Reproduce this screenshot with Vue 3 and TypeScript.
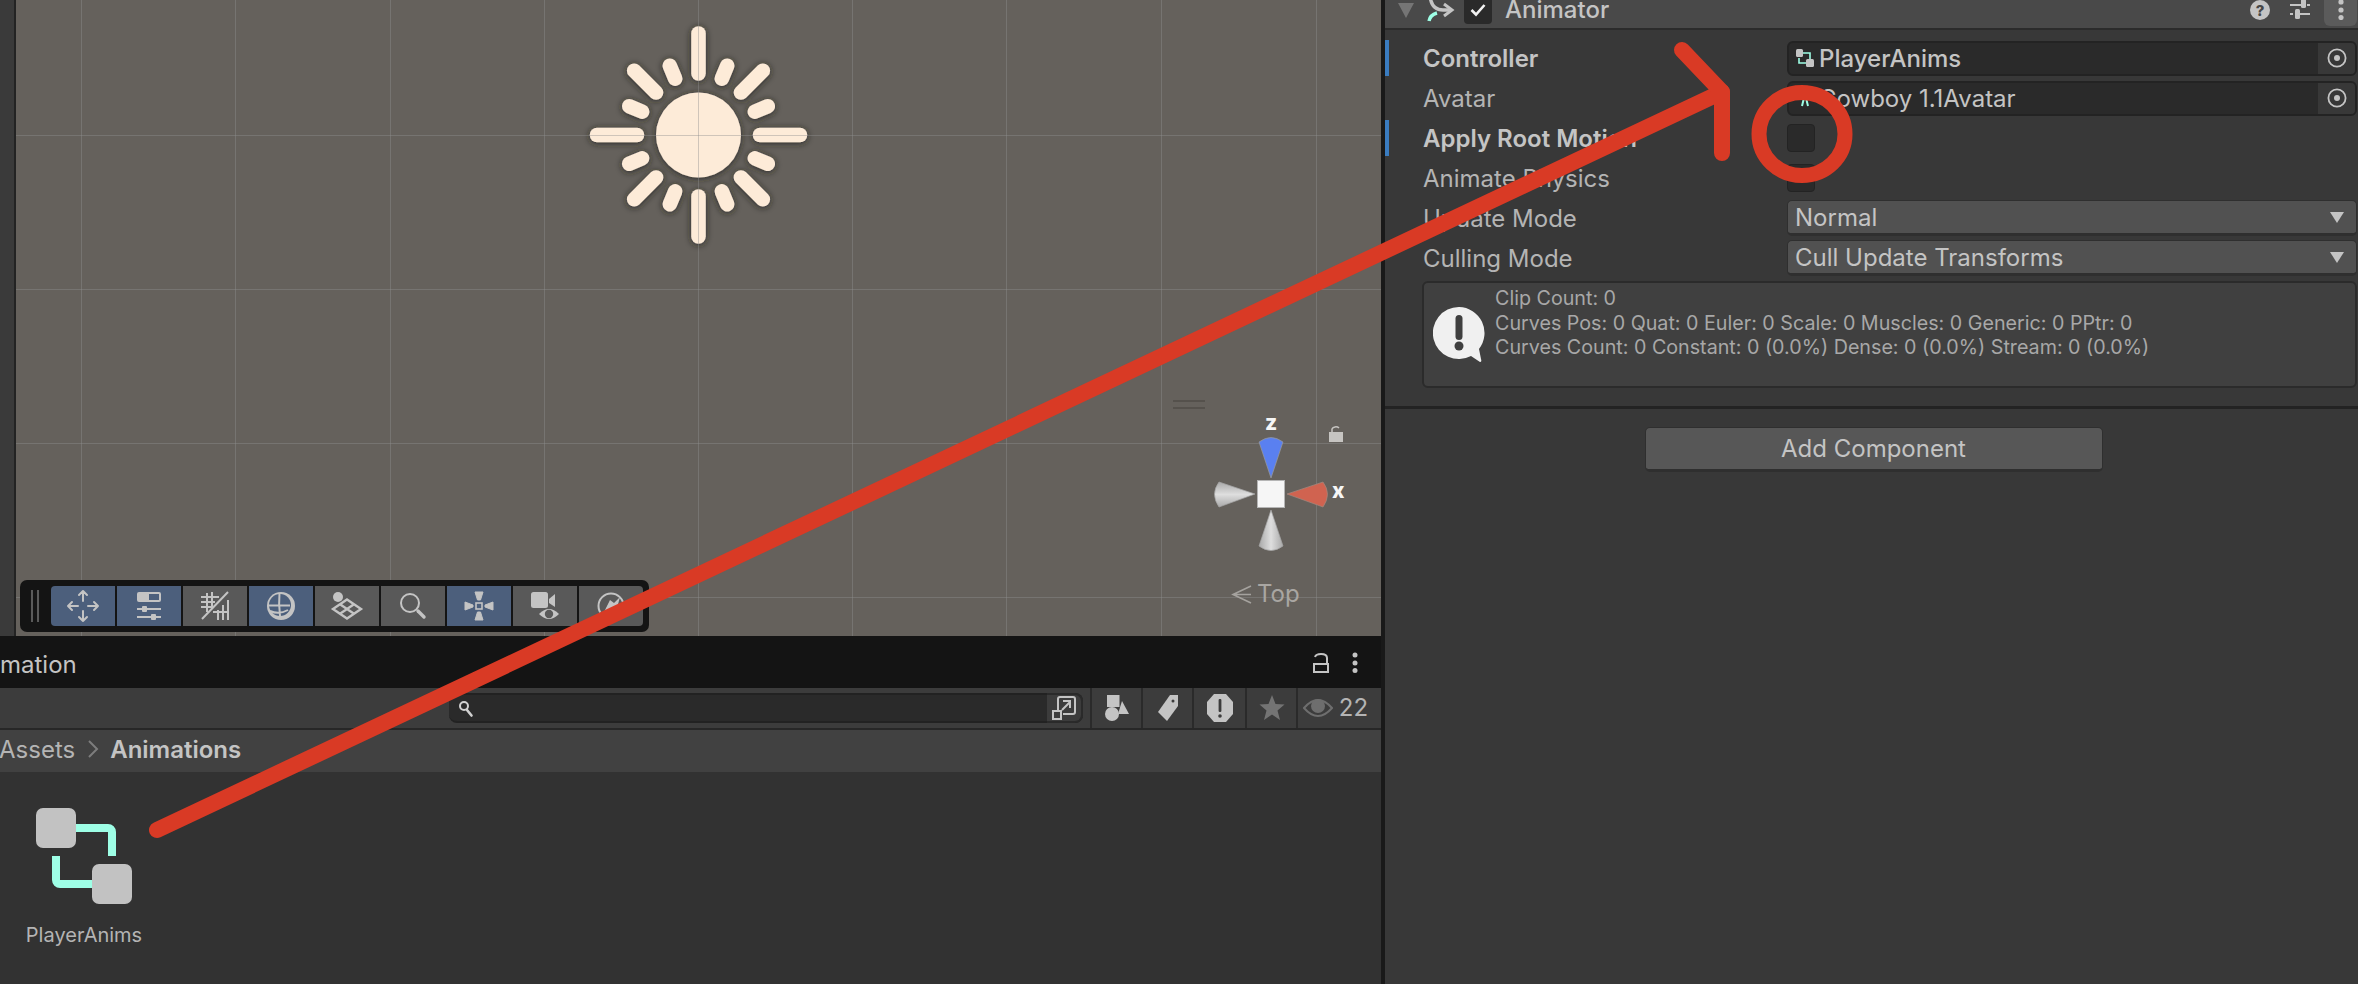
<script setup lang="ts">
const vLines: number[] = [81.5, 235.5, 390.5, 544.5, 698.5, 852.5, 1006.5, 1161.5, 1316.5]
const hLines: number[] = [135.5, 289.5, 443.5, 597.5]

interface Ray { a: number; r1: number; r2: number; w: number }
const rays: Ray[] = []
for (let i = 0; i < 16; i++) {
  const a = i * 22.5
  if (i % 4 === 0) rays.push({ a, r1: 61.5, r2: 101.5, w: 14.5 })
  else if (i % 2 === 0) rays.push({ a, r1: 60, r2: 91, w: 14.5 })
  else rays.push({ a, r1: 61, r2: 75, w: 14.5 })
}

interface Row {
  label: string
  kind: 'object' | 'check' | 'select'
  value?: string
  bold?: boolean
  marked?: boolean
}
const rows: Row[] = [
  { label: 'Controller', kind: 'object', value: 'PlayerAnims', bold: true, marked: true },
  { label: 'Avatar', kind: 'object', value: 'Cowboy 1.1Avatar' },
  { label: 'Apply Root Motion', kind: 'check', bold: true, marked: true },
  { label: 'Animate Physics', kind: 'check' },
  { label: 'Update Mode', kind: 'select', value: 'Normal' },
  { label: 'Culling Mode', kind: 'select', value: 'Cull Update Transforms' },
]
</script>

<template>
  <div class="app">
    <div class="left">
      <section class="scene">
        <svg class="canvas" width="1365" height="636" viewBox="16 0 1365 636">
          <defs>
            <filter id="sunshadow" x="-20%" y="-20%" width="140%" height="140%">
              <feDropShadow dx="0" dy="1" stdDeviation="3.500" flood-color="#1e1a16" flood-opacity="0.85" />
            </filter>
            <linearGradient id="coneV" x1="0" y1="0" x2="1" y2="0">
              <stop offset="0" stop-color="#a9a9a9" />
              <stop offset="0.5" stop-color="#dedede" />
              <stop offset="1" stop-color="#a9a9a9" />
            </linearGradient>
            <linearGradient id="coneH" x1="0" y1="0" x2="0" y2="1">
              <stop offset="0" stop-color="#a9a9a9" />
              <stop offset="0.5" stop-color="#dedede" />
              <stop offset="1" stop-color="#a9a9a9" />
            </linearGradient>
          </defs>
          <g filter="url(#sunshadow)" fill="#fdebd8">
            <circle cx="698.5" cy="135" r="42.5" />
            <g stroke="#fdebd8" stroke-linecap="round">
              <line
                v-for="(r, i) in rays"
                :key="i"
                x1="698.5"
                :y1="135 - r.r1"
                x2="698.5"
                :y2="135 - r.r2"
                :stroke-width="r.w"
                :transform="`rotate(${r.a} 698.5 135)`"
              />
            </g>
          </g>
          <g stroke="#8f8f8f" stroke-opacity="0.42" stroke-width="1">
            <line v-for="x in vLines" :key="x" :x1="x" y1="0" :x2="x" y2="636" />
            <line v-for="y in hLines" :key="y" x1="16" :y1="y" x2="1381" :y2="y" />
          </g>
          <!-- view gizmo -->
          <g>
            <rect x="1173" y="400" width="32" height="2" fill="#55514c" />
            <rect x="1173" y="407" width="32" height="2" fill="#55514c" />
            <path d="M1271 478 L1259 442 Q1271 433 1283 442 Z" fill="#5a80f0" stroke="#9a9a9a" stroke-width="0.7" />
            <path d="M1287 494 L1323 482 Q1332 494 1323 507 Z" fill="#d06350" stroke="#a08a80" stroke-width="0.7" />
            <path d="M1255 494 L1219 482 Q1210 494 1219 507 Z" fill="url(#coneH)" stroke="#a5a5a5" stroke-width="0.7" />
            <path d="M1271 510 L1259 546 Q1271 555 1283 546 Z" fill="url(#coneV)" stroke="#a5a5a5" stroke-width="0.7" />
            <rect x="1257.5" y="480.5" width="27" height="27" fill="#f6f6f6" stroke="#b5b5b5" />
            <rect x="1329" y="432" width="14" height="10" fill="#c6c4c1" />
            <path d="M1332 432 v-3 a4 3 0 0 1 7 -1" fill="none" stroke="#c6c4c1" stroke-width="1.5" />
            <path d="M1251 586 L1233 594.500 L1251 603 M1233 594.500 H1251" fill="none" stroke="#a5a29e" stroke-width="1.6" />
          </g>
        </svg>
        <span class="gizmo-letter letter-z">z</span>
        <span class="gizmo-letter letter-x">x</span>
        <span class="top-label">Top</span>

        <div class="overlay">
          <div class="grip"><i></i><i></i></div>
          <button class="tool on">
            <svg width="64" height="40" viewBox="0 0 64 40" fill="none" stroke="#c4c4c4" stroke-width="2" stroke-linecap="round" stroke-linejoin="round">
              <path d="M32 5 V15 M32 25 V35 M17 20 H27 M37 20 H47 M28 9 L32 5 L36 9 M28 31 L32 35 L36 31 M21 16 L17 20 L21 24 M43 16 L47 20 L43 24" />
            </svg>
          </button>
          <button class="tool on">
            <svg width="64" height="40" viewBox="0 0 64 40" fill="#c4c4c4">
              <rect x="20" y="6" width="24" height="10" rx="2" />
              <rect x="32" y="8" width="10" height="6" fill="#4c5f7c" />
              <rect x="20" y="22" width="24" height="2" />
              <rect x="25" y="20" width="5" height="6" rx="1" />
              <rect x="20" y="30" width="24" height="2" />
              <rect x="34" y="28" width="5" height="6" rx="1" />
            </svg>
          </button>
          <button class="tool">
            <svg width="64" height="40" viewBox="0 0 64 40" fill="none" stroke="#c4c4c4" stroke-width="2">
              <path d="M19 33 L45 6" />
              <path d="M24 7 V26 M29 6 V22 M18 11 H36 M18 16 H32 M18 21 H28 M35 24 V34 M40 19 V34 M45 14 V34 M30 26 H46" />
            </svg>
          </button>
          <button class="tool on">
            <svg width="64" height="40" viewBox="0 0 64 40">
              <circle cx="32" cy="20" r="14" fill="#c4c4c4" />
              <circle cx="31" cy="19" r="11" fill="#4c5f7c" />
              <path d="M30.500 7 Q29.500 18 31 30 M20 19.500 H41 M21 25 Q30 29 39 24" fill="none" stroke="#c4c4c4" stroke-width="2" />
            </svg>
          </button>
          <button class="tool">
            <svg width="64" height="40" viewBox="0 0 64 40" fill="none" stroke="#c4c4c4" stroke-width="2.4">
              <circle cx="23" cy="11" r="5" fill="#c4c4c4" stroke="none" />
              <path d="M32 13.5 L46 23 L32 32.5 L18 23 Z M25 18.2 L39 27.8 M39 18.2 L25 27.8" />
            </svg>
          </button>
          <button class="tool">
            <svg width="64" height="40" viewBox="0 0 64 40" fill="none" stroke="#c4c4c4" stroke-linecap="round">
              <circle cx="29" cy="17" r="9" stroke-width="2" />
              <path d="M37 25 L43 31" stroke-width="3.4" />
            </svg>
          </button>
          <button class="tool on">
            <svg width="64" height="40" viewBox="0 0 64 40" fill="#c4c4c4">
              <path d="M28 6 H36 L33.500 14 H30.500 Z M28 34 H36 L33.500 26 H30.500 Z M18 16 V24 L26 21 V19 Z M46 16 V24 L38 21 V19 Z" stroke="#c4c4c4" stroke-linejoin="round" />
              <rect x="29" y="17" width="6" height="6" fill="none" stroke="#c4c4c4" stroke-width="1.6" />
            </svg>
          </button>
          <button class="tool">
            <svg width="64" height="40" viewBox="0 0 64 40" fill="#c4c4c4">
              <rect x="18" y="6" width="17" height="16" rx="2.5" />
              <path d="M36 13 L42 8 V21 L36 17 Z" />
              <path d="M26 28 Q36 18 46 28 Q36 38 26 28 Z" />
              <circle cx="36" cy="28" r="4.2" fill="#595959" />
            </svg>
          </button>
          <button class="tool">
            <svg width="64" height="40" viewBox="0 0 64 40">
              <circle cx="32" cy="20" r="12.5" fill="none" stroke="#c4c4c4" stroke-width="2" />
              <path d="M24 28 L31 14 L35 17 L41 11 L38 22 Z" fill="#c4c4c4" />
            </svg>
          </button>
        </div>
      </section>

      <section class="project">
        <header class="tabbar">
          <span class="tabname">mation</span>
          <span class="tabicons">
            <svg width="16" height="20" viewBox="0 0 16 20" fill="none" stroke="#c4c4c4" stroke-width="2">
              <rect x="1" y="11" width="14" height="8" />
              <path d="M14 11 V5 Q14 1 8 1 Q3 1 2 4" />
            </svg>
            <svg width="6" height="22" viewBox="0 0 6 22" fill="#c4c4c4">
              <circle cx="3" cy="3" r="2.500" /><circle cx="3" cy="11" r="2.500" /><circle cx="3" cy="18.500" r="2.500" />
            </svg>
          </span>
        </header>
        <div class="filters">
          <div class="search">
            <svg class="search-glass" width="16" height="18" viewBox="0 0 16 18" fill="none" stroke="#d0d0d0" stroke-linecap="round">
              <circle cx="6" cy="6" r="4" stroke-width="2" />
              <path d="M9 10 L13.5 15.5" stroke-width="2.6" />
            </svg>
            <div class="search-input"></div>
            <div class="search-end">
              <svg width="26" height="26" viewBox="0 0 26 26" fill="none" stroke="#c4c4c4" stroke-width="2">
                <path d="M7 15 V4 Q7 2 9 2 H22 Q24 2 24 4 V17 Q24 19 22 19 H12" />
                <rect x="2" y="16" width="8" height="8" />
                <path d="M11 15 L19 7 M12 6 H19 V13" />
              </svg>
            </div>
          </div>
          <div class="fbtn wide1">
            <svg width="26" height="28" viewBox="0 0 26 28" fill="#c4c4c4">
              <rect x="3" y="1" width="12.500" height="12" />
              <circle cx="8" cy="20" r="7" />
              <path d="M18 7 L25 20 H14 Z" />
            </svg>
          </div>
          <div class="fbtn wide1">
            <svg width="22" height="28" viewBox="0 0 22 28">
              <path d="M13 1 H21 V12 L10 27 L1 18 Z" fill="#c4c4c4" />
              <circle cx="16" cy="7" r="1.5" fill="#3c3c3c" />
            </svg>
          </div>
          <div class="fbtn wide2">
            <svg width="28" height="28" viewBox="0 0 28 28">
              <path d="M8 0 H20 L27 8 V20 L20 28 H8 L1 20 V8 Z" fill="#c4c4c4" />
              <rect x="12.6" y="5" width="2.8" height="13" rx="1" fill="#3c3c3c" />
              <circle cx="14" cy="22" r="1.8" fill="#3c3c3c" />
            </svg>
          </div>
          <div class="fbtn wide1">
            <svg width="26" height="28" viewBox="0 0 26 28">
              <path d="M13 1 L16.5 10 L25.5 10.5 L18.5 16.5 L21 26 L13 20.5 L5 26 L7.5 16.5 L0.5 10.5 L9.5 10 Z" fill="#747474" />
            </svg>
          </div>
          <div class="fbtn last">
            <svg width="30" height="22" viewBox="0 0 30 22">
              <path d="M1 11 Q15 -5 29 11 Q15 27 1 11 Z" fill="none" stroke="#6e6e6e" stroke-width="2" />
              <circle cx="15" cy="9" r="7" fill="#6e6e6e" />
            </svg>
            <span class="count">22</span>
          </div>
        </div>
        <nav class="crumbs">
          <span>Assets</span>
          <svg width="12" height="20" viewBox="0 0 12 20" fill="none" stroke="#7d7d7d" stroke-width="2"><path d="M2 2 L10 10 L2 18" /></svg>
          <strong>Animations</strong>
        </nav>
        <div class="assets">
          <figure class="asset">
            <svg width="96" height="96" viewBox="0 0 96 96" fill="none">
              <path d="M40 20 H72 a4 4 0 0 1 4 4 V48 M20 48 V72 a4 4 0 0 0 4 4 H56" stroke="#9effe6" stroke-width="8" />
              <rect x="0" y="0" width="40" height="40" rx="7" fill="#c2c2c2" />
              <rect x="56" y="56" width="40" height="40" rx="7" fill="#c2c2c2" />
            </svg>
            <figcaption>PlayerAnims</figcaption>
          </figure>
        </div>
      </section>
    </div>

    <aside class="inspector">
      <header class="comp-head">
        <span class="fold"></span>
        <svg class="comp-icon" width="28" height="30" viewBox="0 0 28 30" fill="none" stroke-width="3.4">
          <path d="M3 0 Q4 15 16 15 H24" stroke="#c4c4c4" />
          <path d="M17 9 L25 15 L17 21" stroke="#c4c4c4" stroke-width="3" />
          <path d="M2 26 Q3 20 10 18" stroke="#9effe6" />
        </svg>
        <span class="comp-check">
          <svg width="16" height="14" viewBox="0 0 16 14" fill="none" stroke="#f2f2f2" stroke-width="2.6"><path d="M1.5 7 L6 11.5 L14.5 2" /></svg>
        </span>
        <span class="comp-title">Animator</span>
        <span class="comp-tools">
          <svg width="20" height="20" viewBox="0 0 20 20">
            <circle cx="10" cy="10" r="10" fill="#c4c4c4" />
            <text x="10" y="15.5" text-anchor="middle" font-family="Inter" font-weight="800" font-size="15" fill="#474747">?</text>
          </svg>
          <svg class="tune" width="20" height="22" viewBox="0 0 20 22" fill="#c4c4c4">
            <rect x="0" y="5" width="11" height="2" /><rect x="11" y="0" width="5" height="9" rx="1.5" /><rect x="17" y="5" width="3" height="2" />
            <rect x="0" y="14" width="3" height="2" /><rect x="5" y="10" width="5" height="10" rx="1.5" /><rect x="10" y="14" width="10" height="2" />
          </svg>
          <span class="comp-menu">
            <svg width="6" height="24" viewBox="0 0 6 24" fill="#c4c4c4">
              <circle cx="3" cy="6" r="2.600" /><circle cx="3" cy="14" r="2.600" /><circle cx="3" cy="21.500" r="2.600" />
            </svg>
          </span>
        </span>
      </header>

      <div class="rows">
        <div v-for="row in rows" :key="row.label" class="row" :class="{ marked: row.marked }">
          <span class="label" :class="{ bold: row.bold }">{{ row.label }}</span>
          <div v-if="row.kind === 'object'" class="objfield">
            <svg v-if="row.bold" class="objicon" width="18" height="18" viewBox="0 0 18 18" fill="none">
              <path d="M6 4 H14 V10 M3 9 V14 H10" stroke="#9effe6" stroke-width="1.6" />
              <rect x="0" y="0" width="7" height="8" rx="1.5" fill="#c4c4c4" />
              <rect x="10" y="10" width="8" height="8" rx="1.5" fill="#c4c4c4" />
            </svg>
            <svg v-else class="objicon" width="18" height="18" viewBox="0 0 18 18" fill="none">
              <circle cx="9" cy="4" r="3" fill="#c4c4c4" />
              <path d="M6 17 L8 9 H10 L12 17" stroke="#9effe6" stroke-width="2" />
            </svg>
            <span class="objtext" :class="{ bold: row.bold }">{{ row.value }}</span>
            <span class="target">
              <svg width="20" height="20" viewBox="0 0 20 20">
                <circle cx="10" cy="10" r="8.6" fill="none" stroke="#c4c4c4" stroke-width="1.8" />
                <circle cx="10" cy="10" r="3" fill="#c4c4c4" />
              </svg>
            </span>
          </div>
          <span v-else-if="row.kind === 'check'" class="check"></span>
          <div v-else class="select">
            <span>{{ row.value }}</span>
            <i class="caret"></i>
          </div>
        </div>
      </div>

      <div class="help">
        <svg class="help-icon" width="52" height="56" viewBox="0 0 52 56">
          <path d="M26 0 A26 26 0 1 0 38 49 L47 55 Q49 55 48 52 L46 42 A26 26 0 0 0 26 0 Z" fill="#f0f0f0" />
          <rect x="22.500" y="8" width="7" height="25" rx="3.500" fill="#3f3f3f" />
          <circle cx="26" cy="39" r="4.500" fill="#3f3f3f" />
        </svg>
        <div class="help-text">
          <div>Clip Count: 0</div>
          <div>Curves Pos: 0 Quat: 0 Euler: 0 Scale: 0 Muscles: 0 Generic: 0 PPtr: 0</div>
          <div>Curves Count: 0 Constant: 0 (0.0%) Dense: 0 (0.0%) Stream: 0 (0.0%)</div>
        </div>
      </div>

      <div class="divider"></div>
      <div class="add-wrap">
        <button class="add">Add Component</button>
      </div>
    </aside>

    <svg class="annotation" width="2358" height="984" viewBox="0 0 2358 984" fill="none" stroke="#d93a25" stroke-linecap="round" stroke-linejoin="round">
      <path d="M157 830 L1722 92" stroke-width="16" />
      <path d="M1682 50 L1722 92 V153" stroke-width="16" />
      <ellipse cx="1802" cy="134" rx="43" ry="41.500" stroke-width="15" />
    </svg>
  </div>
</template>

<style>
html, body { margin: 0; background: #383838; }
</style>

<style scoped>
.app {
  position: relative;
  display: flex;
  width: 2358px;
  height: 984px;
  overflow: hidden;
  font-family: Inter, "Liberation Sans", sans-serif;
  color: #c4c4c4;
  background: #383838;
}
.left {
  width: 1381px;
  flex: none;
  display: flex;
  flex-direction: column;
}
.scene {
  position: relative;
  height: 636px;
  flex: none;
  background: #65615c;
  border-left: 14px solid #3a3a3a;
  box-sizing: border-box;
}
.scene::before {
  content: "";
  position: absolute;
  left: 0;
  top: 0;
  bottom: 0;
  width: 2px;
  background: #232323;
}
.canvas { position: absolute; left: 2px; top: 0; }
.gizmo-letter {
  position: absolute;
  font-weight: 800;
  font-size: 21px;
  line-height: 20px;
  color: #f6f6f6;
}
.letter-z { left: 1251px; top: 413px; }
.letter-x { left: 1318px; top: 481px; }
.top-label {
  position: absolute;
  left: 1243px;
  top: 579px;
  font-size: 24px;
  line-height: 30px;
  color: #a9a6a2;
}
.overlay {
  position: absolute;
  left: 6px;
  top: 580px;
  width: 629px;
  height: 52px;
  box-sizing: border-box;
  padding: 6px 6px 6px 11px;
  display: flex;
  gap: 2px;
  background: #141414;
  border-radius: 7px;
}
.grip { display: flex; gap: 4px; width: 18px; margin-right: 2px; padding-top: 4px; height: 32px; }
.grip i { width: 2px; height: 32px; background: #5a5a5a; }
.tool {
  width: 64px;
  height: 40px;
  padding: 0;
  border: 0;
  background: #595959;
  display: block;
}
.tool svg { display: block; }
.tool.on { background: #4c5f7c; }
.tool:first-of-type { border-radius: 4px 0 0 4px; }
.tool:last-child { border-radius: 0 4px 4px 0; }

.project {
  flex: 1;
  display: flex;
  flex-direction: column;
  background: #323232;
}
.tabbar {
  height: 52px;
  flex: none;
  display: flex;
  align-items: center;
  justify-content: space-between;
  padding-right: 23px;
  background: #141414;
}
.tabname { font-size: 24px; margin-top: 5px; color: #c4c4c4; }
.tabicons { display: flex; align-items: center; gap: 23px; margin-top: 2px; }
.tabicons svg { display: block; }
.filters {
  height: 42px;
  flex: none;
  display: flex;
  justify-content: flex-end;
  box-sizing: border-box;
  background: #3c3c3c;
  border-bottom: 2px solid #272727;
}
.search {
  position: relative;
  width: 634px;
  height: 30px;
  margin: 5px 7px 0 0;
  display: flex;
  background: #2a2a2a;
  border: 2px solid #222;
  border-width: 2px 0 2px 0;
  border-radius: 8px 8px 8px 8px;
  box-sizing: border-box;
}
.search-glass { position: absolute; left: 9px; top: 5px; }
.search-input { flex: 1; }
.search-end {
  width: 36px;
  flex: none;
  display: flex;
  align-items: center;
  justify-content: center;
  background: #3c3c3c;
  border-radius: 0 8px 8px 0;
  border: 2px solid #2a2a2a;
  border-left: 0;
  margin: -2px 0;
  box-sizing: border-box;
}
.fbtn {
  height: 40px;
  display: flex;
  align-items: center;
  justify-content: center;
  border-left: 2px solid #2a2a2a;
  box-sizing: border-box;
  flex: none;
}
.wide1 { width: 51px; }
.wide2 { width: 53px; }
.last { width: 85px; gap: 6px; }
.count { font-size: 24px; color: #b4b4b4; margin-right: 8px; line-height: 28px; }
.crumbs {
  height: 42px;
  box-sizing: border-box;
  padding-bottom: 4px;
  flex: none;
  display: flex;
  align-items: center;
  gap: 12px;
  margin-left: -1px;
  background: #414141;
  font-size: 24px;
  color: #b4b4b4;
}
.crumbs strong { font-weight: 600; color: #c4c4c4; margin-left: -1px; }
.assets { flex: 1; padding: 36px 0 0 36px; }
.asset { margin: 0; width: 96px; display: flex; flex-direction: column; align-items: center; }
.asset svg { display: block; }
.asset figcaption {
  margin-top: 17px;
  font-size: 20px;
  line-height: 28px;
  white-space: nowrap;
  color: #b4b4b4;
}

.inspector {
  flex: 1;
  min-width: 0;
  border-left: 4px solid #191919;
  display: flex;
  flex-direction: column;
  background: #383838;
}
.comp-head {
  height: 40px;
  margin-top: -10px;
  flex: none;
  display: flex;
  align-items: center;
  background: #494949;
  border-bottom: 2px solid #2b2b2b;
  box-sizing: border-box;
  padding: 2px 0 0 13px;
}
.fold {
  width: 0;
  height: 0;
  border-left: 8.500px solid transparent;
  border-right: 8.500px solid transparent;
  border-top: 15px solid #757575;
}
.comp-icon { margin-left: 13px; }
.comp-check {
  margin-left: 9px;
  width: 28px;
  height: 28px;
  border-radius: 4px;
  background: #2a2a2a;
  display: flex;
  align-items: center;
  justify-content: center;
}
.comp-title { margin-left: 13px; font-size: 24px; line-height: 20px; font-weight: 500; color: #c4c4c4; }
.comp-tools { margin-left: auto; display: flex; align-items: center; }
.comp-tools svg { display: block; }
.tune { margin-left: 20px; }
.comp-menu {
  margin-left: 14px;
  width: 33px;
  height: 36px;
  margin-top: -4px;
  margin-right: 1px;
  background: #5b5b5b;
  border-radius: 0 0 6px 6px;
  display: flex;
  align-items: center;
  justify-content: center;
}
.rows { padding-top: 8px; }
.row {
  position: relative;
  height: 40px;
  display: grid;
  grid-template-columns: 364px 1fr;
  align-items: center;
  padding: 0 1px 0 38px;
  font-size: 24px;
}
.row.marked::before {
  content: "";
  position: absolute;
  left: 0;
  top: 2px;
  width: 4px;
  height: 36px;
  background: #3a7cc0;
}
.label { color: #b4b4b4; white-space: nowrap; }
.label.bold { font-weight: 600; color: #c4c4c4; }
.objfield {
  display: flex;
  align-items: center;
  height: 35px;
  box-sizing: border-box;
  background: #2a2a2a;
  border: 2px solid #232323;
  border-radius: 6px;
  padding-left: 7px;
  overflow: hidden;
}
.objicon { flex: none; }
.objtext { margin-left: 5px; color: #c4c4c4; font-size: 24px; white-space: nowrap; }
.objtext.bold { font-weight: 500; }
.target {
  margin-left: auto;
  width: 37px;
  height: 100%;
  background: #383838;
  display: flex;
  align-items: center;
  justify-content: center;
}
.check {
  width: 28px;
  height: 28px;
  box-sizing: border-box;
  background: #2a2a2a;
  border: 1px solid #232323;
  border-radius: 4px;
}
.select {
  display: flex;
  align-items: center;
  justify-content: space-between;
  height: 36px;
  box-sizing: border-box;
  padding: 0 12px 0 7px;
  background: #515151;
  border: 1px solid #2f2f2f;
  border-width: 1px 1px 3px 1px;
  border-radius: 5px;
  color: #c4c4c4;
}
.caret {
  width: 0;
  height: 0;
  border-left: 7px solid transparent;
  border-right: 7px solid transparent;
  border-top: 11px solid #c4c4c4;
}
.help {
  margin: 3px 1px 0 37px;
  height: 107px;
  box-sizing: border-box;
  display: flex;
  gap: 10px;
  padding: 3px 0 0 9px;
  background: #404040;
  border: 2px solid #2b2b2b;
  border-radius: 6px;
}
.help-icon { flex: none; margin-top: 21px; }
.help-text { font-size: 19.700px; line-height: 24.500px; color: #a8a8a8; white-space: nowrap; }
.divider { height: 3px; margin-top: 18px; background: #232323; flex: none; }
.add-wrap { display: flex; justify-content: center; padding: 18px 0 0 0; }
.add {
  margin-left: 4px;
  width: 458px;
  height: 45px;
  box-sizing: border-box;
  padding: 0;
  font-family: inherit;
  font-size: 24px;
  color: #c4c4c4;
  background: #575757;
  border: 1px solid #2f2f2f;
  border-width: 1px 1px 3px 1px;
  border-radius: 5px;
}
.annotation { position: absolute; left: 0; top: 0; pointer-events: none; }
</style>
